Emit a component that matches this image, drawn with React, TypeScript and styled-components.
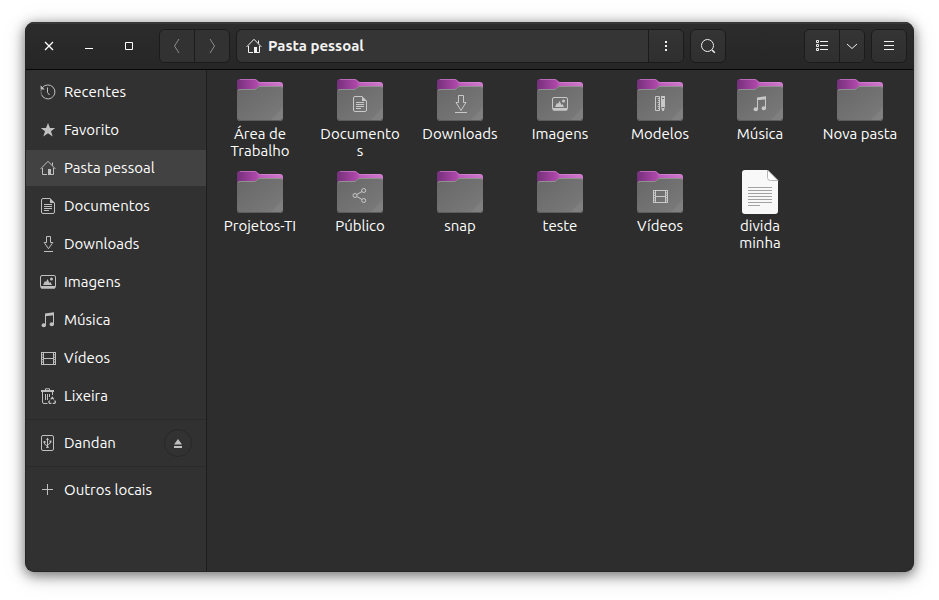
import React from "react";
import styled, { createGlobalStyle } from "styled-components";

const GlobalStyle = createGlobalStyle`
  *, *::before, *::after { box-sizing: border-box; }
  body {
    margin: 0;
    background: #ffffff;
    color: #ffffff;
    font: 15px/17px "Ubuntu", "Noto Sans", sans-serif;
  }
  button { font: inherit; color: inherit; }
`;

const Desktop = styled.div`
  display: flex;
  min-height: 100vh;
  padding: 22px 25px 28px;
`;

const Window = styled.div`
  flex: 1;
  display: flex;
  flex-direction: column;
  min-width: 0;
  overflow: hidden;
  border: 1px solid #262626;
  border-top: 0;
  border-radius: 9px;
  background: #2d2d2d;
  box-shadow: 0 3px 12px 1px rgba(0, 0, 0, 0.45), 0 4px 24px rgba(0, 0, 0, 0.15);
`;

const HeaderBar = styled.header`
  display: flex;
  align-items: center;
  gap: 6px;
  height: 48px;
  padding: 0 6px 0 3px;
  background: linear-gradient(#2c2c2c, #262626);
  border-bottom: 1px solid #070707;
  box-shadow: inset 0 2px #383838;
`;

const WindowControls = styled.div`
  display: flex;
  margin-right: 4px;
`;

const ControlButton = styled.button`
  display: grid;
  place-items: center;
  width: 40px;
  height: 34px;
  padding: 0;
  border: 0;
  background: none;
`;

const ButtonGroup = styled.div<{ $fill?: boolean }>`
  display: flex;
  flex: ${(p) => (p.$fill ? "1" : "none")};
  min-width: 0;
  height: 34px;
  border: 1px solid #1b1b1b;
  border-radius: 6px;
  background: #353535;
  overflow: hidden;
`;

const BarButton = styled.button<{ $narrow?: boolean; $raised?: boolean }>`
  display: grid;
  place-items: center;
  flex: none;
  width: ${(p) => (p.$narrow ? "24px" : "34px")};
  padding: 0;
  border: 0;
  color: #f0f0f0;
  background: ${(p) => (p.$raised ? "linear-gradient(#343434, #2f2f2f)" : "#323232")};
  & + & { box-shadow: -1px 0 #1b1b1b; margin-left: 1px; }
  &:disabled { color: #8e8e8e; }
`;

const PathButton = styled.button`
  display: flex;
  align-items: center;
  flex: 1;
  gap: 6px;
  min-width: 0;
  padding: 0 9px;
  border: 0;
  border-right: 1px solid #1b1b1b;
  background: none;
  color: #f2f2f2;
  font-weight: 700;
  text-align: left;
`;

const SearchGroup = styled(ButtonGroup)`
  margin-right: 72px;
`;

const Body = styled.div`
  display: flex;
  flex: 1;
`;

const Sidebar = styled.nav`
  flex: none;
  width: 181px;
  padding-top: 4px;
  border-right: 1px solid #1d1d1d;
  background: #313131;
`;

const PlaceList = styled.ul`
  display: flex;
  flex-direction: column;
  gap: 2px;
  margin: 0;
  padding: 0;
  list-style: none;
  & + & {
    margin-top: 5px;
    padding-top: 5px;
    border-top: 1px solid #2a2a2a;
  }
`;

const PlaceRow = styled.li<{ $selected?: boolean }>`
  display: flex;
  align-items: center;
  height: 36px;
  padding-right: 14px;
  background: ${(p) => (p.$selected ? "#424242" : "transparent")};
`;

const PlaceLink = styled.a`
  display: flex;
  align-items: center;
  flex: 1;
  gap: 8px;
  padding-left: 14px;
  color: #ffffff;
  line-height: 18px;
  text-decoration: none;
  svg { color: #c0c0c0; }
`;

const EjectButton = styled.button`
  display: grid;
  place-items: center;
  width: 28px;
  height: 28px;
  padding: 0;
  border: 1px solid #282828;
  border-radius: 50%;
  background: #323232;
  color: #c0c0c0;
`;

const FileGrid = styled.main`
  flex: 1;
  display: grid;
  grid-template-columns: repeat(auto-fill, minmax(99px, 1fr));
  align-content: start;
  row-gap: 9px;
  padding: 6px 3px;
`;

const FileItem = styled.a`
  display: flex;
  flex-direction: column;
  align-items: center;
  gap: 1px;
  color: #ffffff;
  text-decoration: none;
`;

const FileLabel = styled.span`
  max-width: 80px;
  text-align: center;
  overflow-wrap: anywhere;
`;

type Glyph =
  | "recent" | "star" | "home" | "document" | "download" | "downloadLarge"
  | "image" | "music" | "video" | "trash" | "usb" | "plus" | "share"
  | "template" | "eject" | "close" | "minimize" | "maximize" | "back"
  | "forward" | "dots" | "search" | "list" | "chevron" | "menu";

const glyphs: Record<Glyph, React.ReactNode> = {
  recent: (
    <>
      <path d="M2.4 3.6A7 7 0 1 1 1.4 10.5" />
      <path d="M.7 9h1M.5 6.8h1" />
      <path d="M.6 1.2v4.2h4.2z" fill="currentColor" stroke="none" />
      <path d="M7.5 3.5v5l2 2.5" />
    </>
  ),
  star: <path fill="currentColor" stroke="none" d="M8 1l2 5h5.2L11 9.2l1.7 5.3L8 11.3l-4.7 3.2L5 9.2.8 6H6z" />,
  home: (
    <>
      <path d="M.6 8.9L8 1.3l7.4 7.6M2.5 8v6.5H7M13.5 8v6.5H11M12.5 2.5v3" />
      <path d="M8 9h3v6H8z" fill="currentColor" stroke="none" />
    </>
  ),
  document: (
    <>
      <path d="M10 .5H3A1.5 1.5 0 0 0 1.5 2v12A1.5 1.5 0 0 0 3 15.5h10a1.5 1.5 0 0 0 1.5-1.5V5" />
      <path d="M10 0l5 5h-5z" fill="currentColor" stroke="none" />
      <path d="M4 6.5h8M4 8.5h8M4 10.5h8M4 12.5h5" />
    </>
  ),
  download: <path d="M6.5.5h4v6h2.3L8.5 12.7 4.2 6.5h2.3zM4 15.5h9" />,
  downloadLarge: <path d="M6.5-.5h5v7H14l-5 8-5-8h2.5zM3 16.5h12" />,
  image: (
    <>
      <rect x=".5" y="1.5" width="15" height="12.5" rx="1.5" />
      <path d="M1 12h14v2.5H1z" fill="currentColor" stroke="none" />
      <path d="M3 11l2-4 1 1 1.500-3 2 4 1-1 1.500 3z" fill="currentColor" stroke="none" />
      <circle cx="11.5" cy="5" r="1.5" fill="currentColor" stroke="none" />
    </>
  ),
  music: (
    <>
      <path d="M5.5 13V2M13.5 1v11.5" />
      <path d="M5 1.5L14 .3v3L5 4.3z" fill="currentColor" stroke="none" />
      <ellipse cx="3.8" cy="13.3" rx="2.2" ry="2" fill="currentColor" stroke="none" />
      <ellipse cx="11.8" cy="12.3" rx="2.2" ry="2" fill="currentColor" stroke="none" />
    </>
  ),
  video: (
    <>
      <path d="M3.5 2v13M13.5 2v13M3.5 2.5h10M3.5 8.5h10M3.5 14.5h10" />
      <path d="M1.5 2v13M15.5 2v13" />
      <path d="M2.5 2v13M14.5 2v13" strokeDasharray="1 1.4" />
    </>
  ),
  trash: (
    <>
      <path d="M5.5 2V.8h4V2" />
      <path d="M1 2h13v2H1z" fill="currentColor" stroke="none" />
      <path d="M2.5 4v10A1.5 1.5 0 0 0 4 15.5h3.5M12.5 4v3M5.5 6v6M7.5 6v6M9.5 6v3" />
      <path d="M10.8 11.3l1.5-2 1.5 2M14.6 12.5l.9 1.5-.9 1.5h-1.800M11.5 15.5H9.7L8.8 14l.9-1.5" strokeWidth="1.3" />
    </>
  ),
  usb: (
    <>
      <rect x="1.5" y=".5" width="12" height="15" rx="1.5" />
      <path d="M7.5 3.5V13M4.5 6.5V9l3 2M10.5 6v2l-3 2" />
      <path d="M7.5 2.5L9 5H6zM3.5 6h2v2h-2zM9.5 5.5h2v2h-2zM6.3 11.5h2.4V13H6.3z" fill="currentColor" stroke="none" />
    </>
  ),
  plus: <path d="M2 7.5h11M7.5 2v11" />,
  share: (
    <>
      <circle cx="3" cy="7.5" r="2" />
      <circle cx="11.7" cy="2.5" r="2" />
      <circle cx="11.7" cy="12.5" r="2" />
      <path d="M4.8 6.5l5.2-3M4.8 8.5l5.2 3" />
    </>
  ),
  template: (
    <>
      <path d="M3.5.5h4v14h-4zM5.5 2.5h2M6 4.5h1.5M5.5 6.5h2M6 8.5h1.5M5.5 10.5h2M6 12.5h1.5" />
      <path d="M9 0h4v11l-1.2 4h-1.6L9 11z" fill="currentColor" stroke="none" />
      <path d="M10 2.5h2M9.5 11.5h3" stroke="#707070" />
    </>
  ),
  eject: <path d="M8 4l4 5.5H4zM4 11h8v2H4z" fill="currentColor" stroke="none" />,
  close: <path d="M4 4l8 8M12 4l-8 8" strokeWidth="1.3" />,
  minimize: <path d="M4 10.5h8" />,
  maximize: <path d="M4.5 4.5h7v7h-7z" />,
  back: <path d="M10 1L5.5 8l4.5 7" />,
  forward: <path d="M6 1l4.5 7L6 15" />,
  dots: <path d="M7 3h2v2H7zM7 7h2v2H7zM7 11h2v2H7z" fill="currentColor" stroke="none" />,
  search: (
    <>
      <circle cx="7.5" cy="7.5" r="6" />
      <path d="M12 12l2.8 2.8" strokeWidth="1.5" />
    </>
  ),
  list: <path d="M2.5 2.5h2v2h-2zM2.5 6.5h2v2h-2zM2.5 10.5h2v2h-2zM6 3.5h8M6 7.5h8M6 11.5h8" />,
  chevron: <path d="M3 6l5 4.5L13 6" />,
  menu: <path d="M3 3.5h10M3 7.5h10M3 11.5h10" />,
};

const GlyphSvg = styled.svg`
  flex: none;
  display: block;
  fill: none;
  stroke: currentColor;
`;

const Icon = ({ name }: { name: Glyph }) => (
  <GlyphSvg width="16" height="16" viewBox="0 0 16 16" aria-hidden="true">
    {glyphs[name]}
  </GlyphSvg>
);

const FolderPicture = ({ emblem }: { emblem?: Glyph }) => (
  <svg width="48" height="48" viewBox="0 0 48 48" aria-hidden="true">
    <path
      d="M4 3h14.5c1.5 0 2 .6 2.8 1.5S23 6 24.5 6H44a3 3 0 0 1 3 3v16H1V6a3 3 0 0 1 3-3z"
      fill="url(#folder-back)"
    />
    <path d="M4 3.5h14.5c1.5 0 2 .6 2.8 1.5s1.7 1.5 3.2 1.5H44" fill="none" stroke="#d98fd8" strokeOpacity=".55" />
    <path
      d="M4 13h14c1.5 0 2.2-.6 3-1.5s1.5-1.5 3-1.5h20a3 3 0 0 1 3 3v29a3 3 0 0 1-3 3H4a3 3 0 0 1-3-3V16a3 3 0 0 1 3-3z"
      fill="url(#folder-front)"
    />
    <path d="M47 31v11a3 3 0 0 1-3 3H34z" fill="#ffffff" fillOpacity=".06" />
    <path
      d="M2 14.5a3 3 0 0 1 2-1h14c1.5 0 2.2-.6 3-1.5s1.5-1.5 3-1.5h20a3 3 0 0 1 2 1"
      fill="none"
      stroke="#919191"
    />
    <path d="M1.5 42.5A2.5 2.5 0 0 0 4 44.5h40a2.5 2.5 0 0 0 2.5-2" fill="none" stroke="#5c5c5c" />
    {emblem && (
      <g transform="translate(16 20)" fill="none" stroke="currentColor" color="#c8c8c8">
        {glyphs[emblem]}
      </g>
    )}
  </svg>
);

const TextFilePicture = () => (
  <svg width="48" height="48" viewBox="0 0 48 48" aria-hidden="true">
    <path d="M9 2h22.5L42 12.5V43a3 3 0 0 1-3 3H9a3 3 0 0 1-3-3V5a3 3 0 0 1 3-3z" fill="#f8f8f8" />
    <path d="M31.5 2v7.500a3 3 0 0 0 3 3H42z" fill="#ffffff" stroke="#b5b5b5" strokeLinejoin="round" />
    <path d="M12 19.5h24M12 22.5h24M12 25.5h24M12 28.5h24M12 31.5h24M12 34.5h24M12 37.5h12" stroke="#a2a2a2" />
  </svg>
);

const DefsSvg = styled.svg`
  flex: none;
  width: 0;
  height: 0;
`;

const GradientDefs = () => (
  <DefsSvg aria-hidden="true">
    <defs>
      <linearGradient id="folder-back" gradientUnits="userSpaceOnUse" x1="1" y1="10" x2="47" y2="10">
        <stop offset="0" stopColor="#74307a" />
        <stop offset=".42" stopColor="#ad47a9" />
        <stop offset=".5" stopColor="#bd5cba" />
        <stop offset="1" stopColor="#cf7acb" />
      </linearGradient>
      <linearGradient id="folder-front" x1="0" y1="0" x2="1" y2="1">
        <stop offset="0" stopColor="#676767" />
        <stop offset="1" stopColor="#7b7b7b" />
      </linearGradient>
    </defs>
  </DefsSvg>
);

type Place = { name: string; icon: Glyph; selected?: boolean; removable?: boolean };

const placeGroups: Place[][] = [
  [
    { name: "Recentes", icon: "recent" },
    { name: "Favorito", icon: "star" },
    { name: "Pasta pessoal", icon: "home", selected: true },
    { name: "Documentos", icon: "document" },
    { name: "Downloads", icon: "download" },
    { name: "Imagens", icon: "image" },
    { name: "Música", icon: "music" },
    { name: "Vídeos", icon: "video" },
    { name: "Lixeira", icon: "trash" },
  ],
  [{ name: "Dandan", icon: "usb", removable: true }],
  [{ name: "Outros locais", icon: "plus" }],
];

type Entry = { name: string; emblem?: Glyph; isFile?: boolean };

const entries: Entry[] = [
  { name: "Área de Trabalho" },
  { name: "Documentos", emblem: "document" },
  { name: "Downloads", emblem: "downloadLarge" },
  { name: "Imagens", emblem: "image" },
  { name: "Modelos", emblem: "template" },
  { name: "Música", emblem: "music" },
  { name: "Nova pasta" },
  { name: "Projetos-TI" },
  { name: "Público", emblem: "share" },
  { name: "snap" },
  { name: "teste" },
  { name: "Vídeos", emblem: "video" },
  { name: "divida minha", isFile: true },
];

export default function App() {
  return (
    <Desktop>
      <GlobalStyle />
      <GradientDefs />
      <Window>
        <HeaderBar>
          <WindowControls>
            <ControlButton aria-label="Fechar"><Icon name="close" /></ControlButton>
            <ControlButton aria-label="Minimizar"><Icon name="minimize" /></ControlButton>
            <ControlButton aria-label="Maximizar"><Icon name="maximize" /></ControlButton>
          </WindowControls>
          <ButtonGroup>
            <BarButton disabled aria-label="Voltar"><Icon name="back" /></BarButton>
            <BarButton disabled aria-label="Avançar"><Icon name="forward" /></BarButton>
          </ButtonGroup>
          <ButtonGroup $fill>
            <PathButton><Icon name="home" />Pasta pessoal</PathButton>
            <BarButton $raised aria-label="Opções da pasta"><Icon name="dots" /></BarButton>
          </ButtonGroup>
          <SearchGroup>
            <BarButton $raised aria-label="Pesquisar"><Icon name="search" /></BarButton>
          </SearchGroup>
          <ButtonGroup>
            <BarButton $raised aria-label="Exibir em lista"><Icon name="list" /></BarButton>
            <BarButton $raised $narrow aria-label="Opções de exibição"><Icon name="chevron" /></BarButton>
          </ButtonGroup>
          <ButtonGroup>
            <BarButton $raised aria-label="Menu"><Icon name="menu" /></BarButton>
          </ButtonGroup>
        </HeaderBar>
        <Body>
          <Sidebar aria-label="Locais">
            {placeGroups.map((group) => (
              <PlaceList key={group[0].name}>
                {group.map((place) => (
                  <PlaceRow key={place.name} $selected={place.selected}>
                    <PlaceLink href="#"><Icon name={place.icon} />{place.name}</PlaceLink>
                    {place.removable && (
                      <EjectButton aria-label="Ejetar"><Icon name="eject" /></EjectButton>
                    )}
                  </PlaceRow>
                ))}
              </PlaceList>
            ))}
          </Sidebar>
          <FileGrid>
            {entries.map((entry) => (
              <FileItem href="#" key={entry.name}>
                {entry.isFile ? <TextFilePicture /> : <FolderPicture emblem={entry.emblem} />}
                <FileLabel>{entry.name}</FileLabel>
              </FileItem>
            ))}
          </FileGrid>
        </Body>
      </Window>
    </Desktop>
  );
}
